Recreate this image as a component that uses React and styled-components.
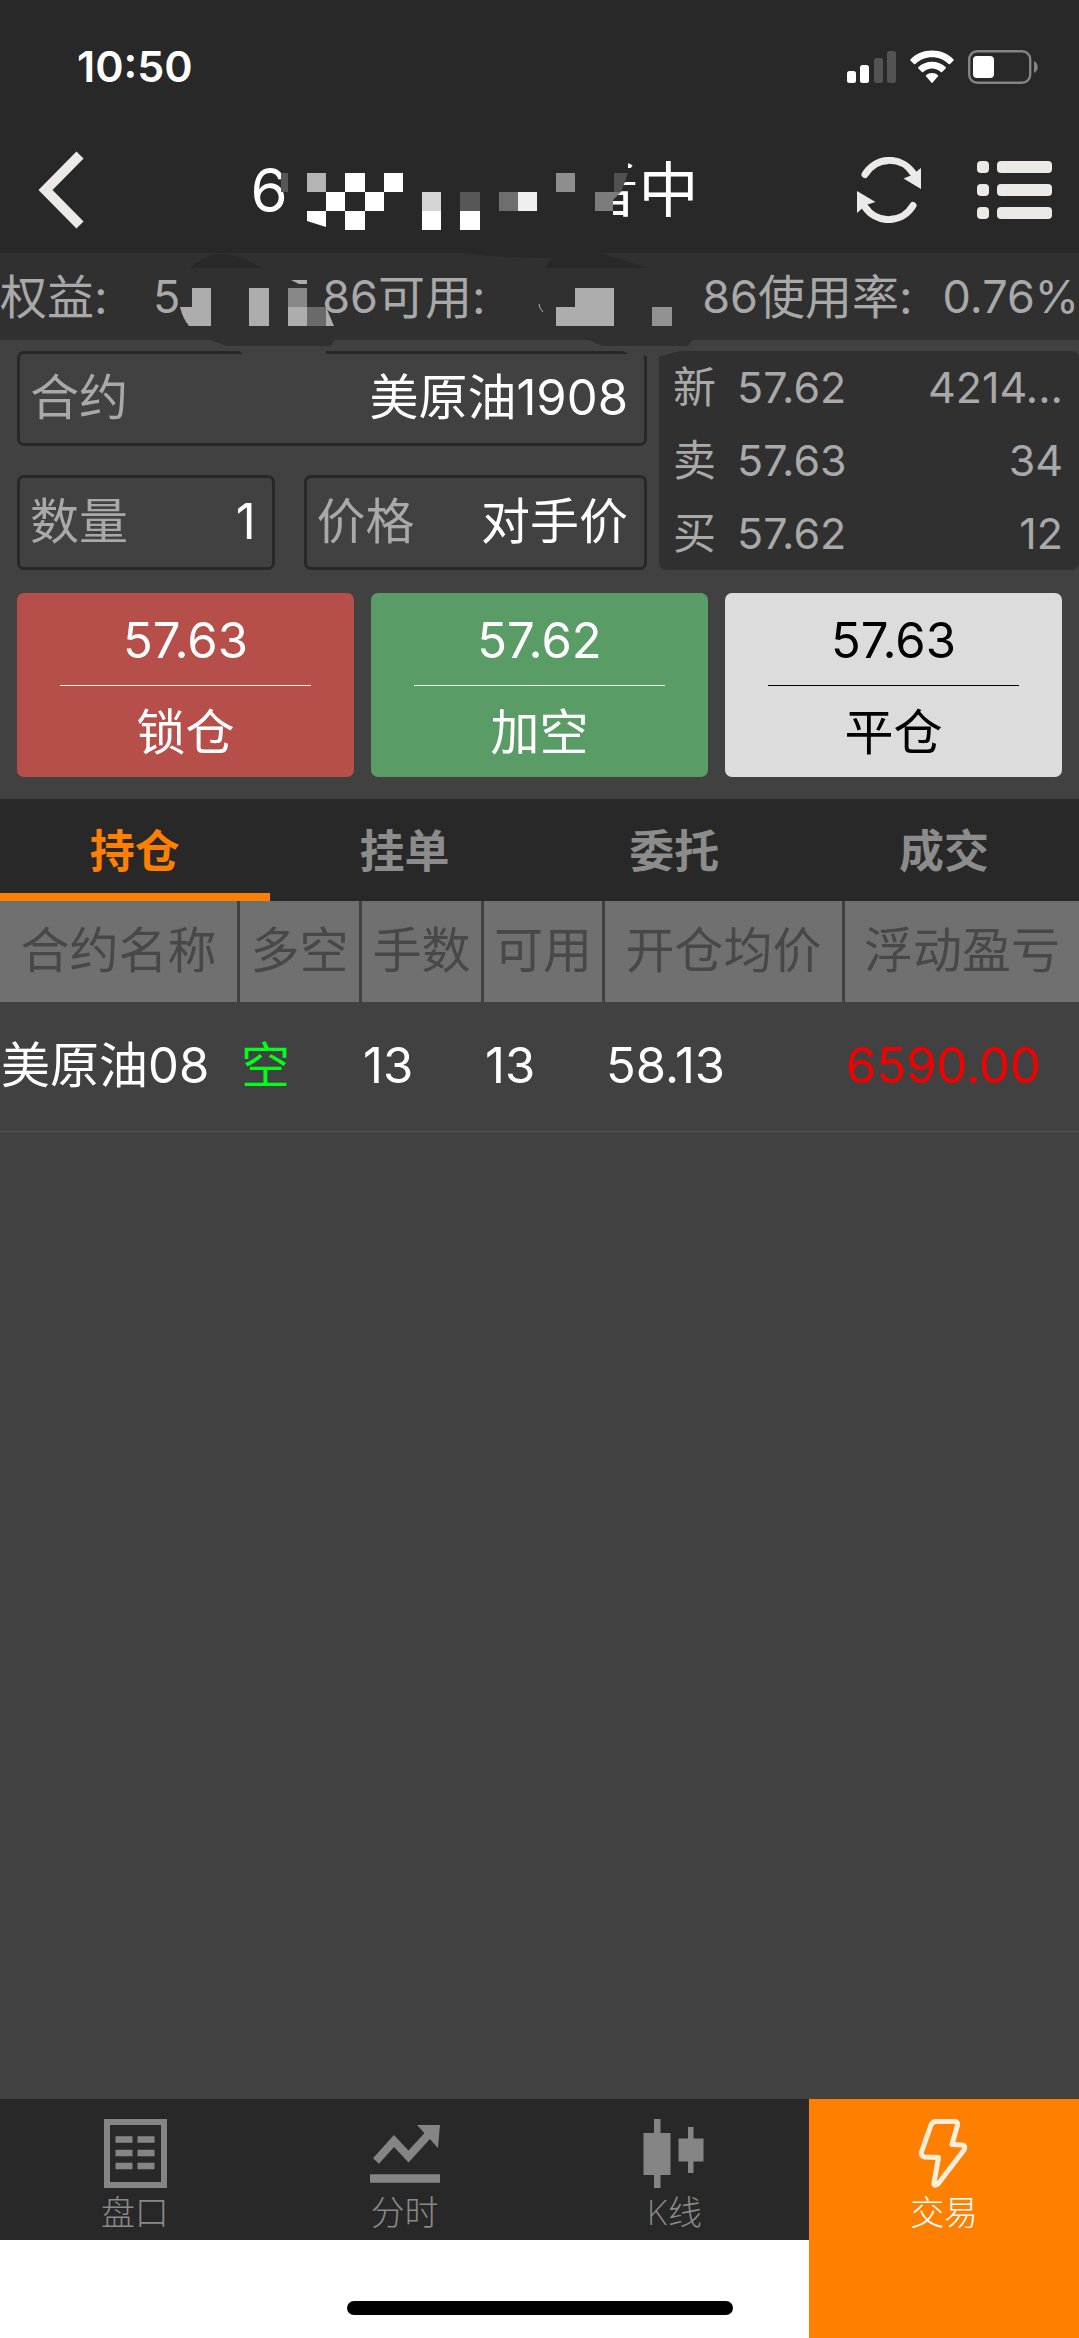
import React, { useState } from 'react';
import styled, { createGlobalStyle } from 'styled-components';

// Color Variables
const mainColor = '#ff8000';
const barColor = '#282828';
const stripColor = '#303030';
const pageColor = '#414141';
const subTextColor = '#a9a9a9';
const iconColor = '#ede9e7';
const tabIconColor = '#858585';

const GlobalStyle = createGlobalStyle`
  * {
    box-sizing: border-box;
  }
  body {
    margin: 0;
    background: ${pageColor};
    font-family: Inter, 'Noto Sans CJK SC', sans-serif;
    font-weight: 400;
    line-height: 1.2;
  }
  button,
  input,
  select {
    font: inherit;
    color: inherit;
    border: none;
    background: none;
    padding: 0;
    margin: 0;
    outline: none;
  }
  button {
    cursor: pointer;
  }
`;

const Page = styled.div`
  position: relative;
  display: flex;
  flex-direction: column;
  min-height: 100vh;
  background: ${pageColor};
  color: white;
`;

const TopBar = styled.header`
  background: ${barColor};
`;

const StatusBar = styled.div`
  display: flex;
  align-items: center;
  justify-content: space-between;
  height: 127px;
  padding: 6px 40px 0 77px;
`;

const Clock = styled.span`
  font-size: 43px;
  font-weight: 600;
`;

const StatusIcons = styled.div`
  display: flex;
  align-items: center;
  gap: 14px;
`;

const NavRow = styled.div`
  display: flex;
  align-items: center;
  justify-content: space-between;
  height: 126px;
  padding: 0 27px 0 38px;
`;

const IconButton = styled.button`
  display: flex;
`;

const NavActions = styled.div`
  display: flex;
  align-items: center;
  gap: 56px;
`;

const Title = styled.h1`
  display: flex;
  justify-content: space-between;
  width: 448px;
  margin: 0;
  font-size: 60px;
  font-weight: 400;
  line-height: 80px;
`;

const Funds = styled.dl`
  display: grid;
  grid-template-columns: 378fr 380fr 321fr;
  height: 87px;
  margin: 0;
  background: ${stripColor};
  color: ${subTextColor};
  line-height: 87px;
`;

const FundItem = styled.div`
  display: flex;
  justify-content: space-between;
  white-space: nowrap;
`;

const FundLabel = styled.dt`
  font-size: 47px;
`;

const FundValue = styled.dd`
  display: flex;
  justify-content: space-between;
  min-width: ${props => (props.$wide ? '225px' : '0')};
  margin: 0;
  font-size: 45px;
`;

const Smudge = styled.svg`
  position: absolute;
  top: 0;
  left: 0;
  pointer-events: none;
`;

const OrderForm = styled.form`
  display: flex;
  flex-direction: column;
  gap: 23px;
  padding: 11px 0 22px 17px;
`;

const OrderTop = styled.div`
  display: grid;
  grid-template-columns: minmax(0, 3fr) minmax(0, 2fr);
  gap: 12px;
`;

const Fields = styled.div`
  display: grid;
  grid-template-columns: minmax(0, 3fr) minmax(0, 4fr);
  gap: 29px;
`;

const Field = styled.label`
  display: flex;
  align-items: center;
  height: 95px;
  padding: 0 16px 0 10px;
  border: 3px solid ${barColor};
  border-radius: 7px;
  font-size: 49px;
  grid-column: ${props => (props.$full ? '1 / -1' : 'auto')};
`;

const FieldName = styled.span`
  flex: none;
  color: ${subTextColor};
`;

const FieldInput = styled.input`
  flex: 1;
  width: 100%;
  min-width: 0;
  text-align: right;
`;

const FieldSelect = styled.select`
  flex: 1;
  min-width: 0;
  appearance: none;
  text-align: right;
  text-align-last: right;
`;

const QuoteBox = styled.dl`
  display: grid;
  grid-template-rows: repeat(3, 1fr);
  margin: 0;
  padding: 0 16px 0 14px;
  border-radius: 7px;
  background: ${stripColor};
  color: ${subTextColor};
  font-size: 43px;
`;

const QuoteRow = styled.div`
  display: grid;
  grid-template-columns: 64px 1fr auto;
  align-items: center;
`;

const QuoteName = styled.dt``;

const QuoteValue = styled.dd`
  margin: 0;
`;

const OrderButtons = styled.div`
  display: grid;
  grid-template-columns: repeat(3, 1fr);
  gap: 17px;
  padding-right: 17px;
`;

const OrderButton = styled.button`
  display: flex;
  flex-direction: column;
  height: 184px;
  padding: 4px 43px 0;
  border-radius: 7px;
  background: ${props => props.$bg};
  color: ${props => props.$color};
  font-size: 49px;
  line-height: 88px;
`;

const OrderPrice = styled.span`
  width: 100%;
  border-bottom: 1px solid;
`;

const OrderName = styled.span`
  width: 100%;
  padding-top: 3px;
`;

const Tabs = styled.nav`
  display: grid;
  grid-template-columns: repeat(4, 1fr);
  background: ${barColor};
`;

const Tab = styled.button`
  height: 102px;
  padding-top: 12px;
  border-bottom: 8px solid
    ${props => (props.$active ? mainColor : 'transparent')};
  color: ${props => (props.$active ? mainColor : '#8c8c8c')};
  font-size: 45px;
  font-weight: 700;
`;

const Content = styled.main`
  flex: 1;
`;

const Table = styled.table`
  width: 100%;
  table-layout: fixed;
  border-collapse: separate;
  border-spacing: 0;
  font-size: 49px;
  white-space: nowrap;
`;

const Th = styled.th`
  width: ${props => props.$width};
  height: 101px;
  padding: 0;
  background: #707070;
  border-right: 3px solid ${pageColor};
  color: #484848;
  font-weight: 400;
  &:last-child {
    border-right: none;
  }
`;

const Td = styled.td`
  height: 130px;
  padding: 0 0 0 1px;
  border-bottom: 1px solid #555555;
  color: ${props => props.$color || 'white'};
`;

const BottomNav = styled.nav`
  position: relative;
  display: grid;
  grid-template-columns: repeat(4, 1fr);
  align-items: start;
  height: 239px;
  background: white;
`;

const BottomItem = styled.button`
  display: flex;
  flex-direction: column;
  align-items: center;
  gap: 2px;
  height: ${props => (props.$active ? '239px' : '141px')};
  padding-top: 20px;
  background: ${props => (props.$active ? mainColor : barColor)};
  color: ${props => (props.$active ? 'white' : '#8a8a8a')};
  font-size: 34px;
  font-weight: 200;
  line-height: 46px;
`;

const HomeIndicator = styled.div`
  position: absolute;
  bottom: 23px;
  left: 50%;
  width: 386px;
  height: 14px;
  border-radius: 7px;
  background: black;
  transform: translateX(-50%);
`;

const SignalIcon = () => (
  <svg width="49" height="32" viewBox="0 0 49 32">
    <rect x="0" y="20" width="9" height="12" rx="2.5" fill="#fff" />
    <rect x="13" y="14" width="9" height="18" rx="2.5" fill="#fff" />
    <rect x="27" y="7" width="9" height="25" rx="2.5" fill="#535353" />
    <rect x="40" y="0" width="9" height="32" rx="2.5" fill="#535353" />
  </svg>
);

const WifiIcon = () => (
  <svg width="44" height="33" viewBox="0 0 44 33" fill="#fff">
    <path d="M22 0.5C13.5 0.5 6 3.8 0.6 9.2c-.5.5-.5 1 0 1.5L4 14c.5.4 1 .4 1.400 0C9.700 9.700 15.500 7.200 22 7.200S34.300 9.700 38.600 14c.4.4.9.4 1.400 0l3.400-3.300c.5-.5.5-1 0-1.500C38 3.800 30.500.5 22 .5z" />
    <path d="M22 11.800c-5.300 0-10 2-13.600 5.300-.5.5-.5 1 0 1.500l3.500 3.400c.4.4.9.4 1.400 0 2.300-2.100 5.300-3.400 8.700-3.400s6.400 1.300 8.700 3.400c.5.4 1 .4 1.400 0l3.500-3.400c.5-.5.5-1 0-1.500C32 13.800 27.300 11.800 22 11.800z" />
    <path d="M22 23c-2.300 0-4.300.8-5.800 2.100-.5.5-.5 1 0 1.500l5.100 6c.4.500 1 .5 1.400 0l5.100-6c.5-.5.5-1 0-1.500C26.300 23.800 24.300 23 22 23z" />
  </svg>
);

const BatteryIcon = () => (
  <svg width="71" height="34" viewBox="0 0 71 34">
    <rect
      x="1.2"
      y="1.2"
      width="61"
      height="31.6"
      rx="8"
      fill="none"
      stroke="#848484"
      strokeWidth="2.4"
    />
    <rect x="5" y="6" width="21" height="22" rx="4" fill="#fff" />
    <path d="M66 11c5 2.500 5 9.500 0 12z" fill="#848484" />
  </svg>
);

const BackIcon = () => (
  <svg width="54" height="78" viewBox="0 0 54 78">
    <path
      d="M42 4L7.500 39L42 74"
      fill="none"
      stroke={iconColor}
      strokeWidth="10"
    />
  </svg>
);

const RefreshIcon = () => (
  <svg width="64" height="66" viewBox="0 0 64 66">
    <g fill="none" stroke={iconColor} strokeWidth="7" strokeLinecap="round">
      <path d="M8 17.500A28.500 29 0 0 1 56 16" />
      <path d="M56 48.500A28.500 29 0 0 1 8 50" />
    </g>
    <path d="M64 11V32L46.500 21.500L55 18z" fill={iconColor} />
    <path d="M0 34L18.500 45L9 48L0 56z" fill={iconColor} />
  </svg>
);

const ListIcon = () => (
  <svg width="75" height="58" viewBox="0 0 75 58" fill={iconColor}>
    {[0, 23, 46].map(y => (
      <g key={y}>
        <rect x="0" y={y} width="12" height="12" rx="4" />
        <rect x="20" y={y} width="55" height="12" rx="4" />
      </g>
    ))}
  </svg>
);

const BookIcon = () => (
  <svg width="70" height="69" viewBox="0 0 70 69">
    <rect
      x="7"
      y="3"
      width="57"
      height="63"
      fill="none"
      stroke={tabIconColor}
      strokeWidth="6"
    />
    <path
      d="M15.500 20.500h17M37.500 20.500h17M15.500 34h17M37.500 34h17M15.500 47h17M37.500 47h17"
      stroke={tabIconColor}
      strokeWidth="6.5"
    />
  </svg>
);

const TrendIcon = () => (
  <svg width="70" height="69" viewBox="0 0 70 69" fill="none">
    <path
      d="M6 42L24 22L38.500 37.500L60 14"
      stroke={tabIconColor}
      strokeWidth="8"
    />
    <path d="M47 6H70L68 29z" fill={tabIconColor} />
    <path d="M0 59.500h70" stroke={tabIconColor} strokeWidth="8.5" />
  </svg>
);

const CandleIcon = () => (
  <svg width="70" height="69" viewBox="0 0 70 69" fill={tabIconColor}>
    <rect x="15" y="0" width="6.500" height="69" />
    <rect x="4.500" y="14" width="27" height="42" />
    <rect x="49" y="8" width="5.500" height="46" />
    <rect x="39.500" y="19.500" width="25" height="23" />
  </svg>
);

const BoltIcon = () => (
  <svg width="70" height="69" viewBox="0 0 70 69">
    <path
      d="M27 2.500H46Q49 2.500 48.500 6L43 25.500L53.500 26Q57 27 55 31L29 65Q25 68 25 64L29.500 38.500L15.500 38Q11.500 37 12.500 33L22 6Q23.500 2.500 27 2.500z"
      fill="none"
      stroke="#ffeeda"
      strokeWidth="5"
      strokeLinejoin="round"
    />
  </svg>
);

// mosaic blocks: x, y, width, height, color
const mosaic = [
  [281, 173, 7, 19, '#575757'],
  [307, 173, 19, 19, '#b4b4b4'],
  [345, 173, 20, 19, '#fff'],
  [384, 173, 19, 19, '#fff'],
  [556, 173, 19, 19, '#8e8e8e'],
  [326, 192, 19, 19, '#fff'],
  [365, 192, 19, 19, '#fff'],
  [422, 192, 19, 19, '#d5d5d5'],
  [460, 192, 20, 19, '#575757'],
  [499, 192, 19, 19, '#6e6e6e'],
  [518, 192, 19, 19, '#efefef'],
  [345, 211, 20, 19, '#fff'],
  [422, 211, 19, 19, '#fff'],
  [460, 211, 20, 19, '#fff'],
  [192, 288, 19, 38, '#adadad'],
  [249, 288, 20, 38, '#adadad'],
  [288, 288, 19, 19, '#888'],
  [288, 307, 19, 19, '#adadad'],
  [307, 307, 19, 19, '#6a6a6a'],
  [575, 288, 39, 38, '#adadad'],
  [556, 307, 19, 19, '#adadad'],
  [652, 307, 20, 19, '#929292'],
];

const PrivacySmudge = () => (
  <Smudge width="1079" height="380" viewBox="0 0 1079 380" aria-hidden="true">
    <path
      d="M570 155H628V168H642V182H625L613 200V225H570z"
      fill={barColor}
    />
    <path d="M190 268C202 258 213 254 223 254Q238 254 262 268z" fill={barColor} />
    <path d="M464 253H600L648 268H545L552 258Q500 258 464 253z" fill={barColor} />
    <path d="M238 350L245 356H326V350z" fill={pageColor} />
    <path d="M621 350L631 355H644V356H662L683 350z" fill={pageColor} />
    <path d="M211 340L226 346H331L334 340z" fill={stripColor} />
    <path d="M588 340L603 346H688L693 340z" fill={stripColor} />
    {mosaic.map(([x, y, w, h, color]) => (
      <rect key={`${x}-${y}`} x={x} y={y} width={w} height={h} fill={color} />
    ))}
    <path d="M307 211H326V227L307 221z" fill="#fff" />
    <path d="M614 173H628L621 192H614z" fill="#505050" />
    <path d="M595 192H621L613 200V211H595z" fill="#7c7c7c" />
    <path d="M180 307H192V326H189Q183 319 180 307z" fill="#adadad" />
    <path d="M326 307L334 326H326z" fill="#adadad" />
    <path d="M291 280H307V284H299z" fill="#adadad" />
    <path d="M539 304Q539 308 543 312" stroke="#adadad" fill="none" />
  </Smudge>
);

const quotes = [
  { name: '新', price: '57.62', volume: '4214...' },
  { name: '卖', price: '57.63', volume: '34' },
  { name: '买', price: '57.62', volume: '12' },
];

const orders = [
  { name: '锁仓', price: '57.63', bg: '#b64e4a', color: 'white' },
  { name: '加空', price: '57.62', bg: '#5a9c65', color: 'white' },
  { name: '平仓', price: '57.63', bg: '#dcdcdc', color: 'black' },
];

const tabs = ['持仓', '挂单', '委托', '成交'];

const columns = [
  { name: '合约名称', width: '240px' },
  { name: '多空', width: '122px' },
  { name: '手数', width: '122px' },
  { name: '可用', width: '121px' },
  { name: '开仓均价', width: '240px' },
  { name: '浮动盈亏', width: 'auto' },
];

const bottomItems = [
  { name: '盘口', Icon: BookIcon },
  { name: '分时', Icon: TrendIcon },
  { name: 'K线', Icon: CandleIcon },
  { name: '交易', Icon: BoltIcon },
];

export default function App() {
  const [tab, setTab] = useState('持仓');
  const [inputs, setInputs] = useState({
    contract: '美原油1908',
    amount: '1',
    price: '对手价',
  });

  const handleChange = e => {
    setInputs({
      ...inputs,
      [e.target.name]: e.target.value,
    });
  };

  return (
    <Page>
      <GlobalStyle />
      <TopBar>
        <StatusBar>
          <Clock>10:50</Clock>
          <StatusIcons>
            <SignalIcon />
            <WifiIcon />
            <BatteryIcon />
          </StatusIcons>
        </StatusBar>
        <NavRow>
          <IconButton type="button" aria-label="返回">
            <BackIcon />
          </IconButton>
          <Title>
            <span>6</span>
            <span>者中</span>
          </Title>
          <NavActions>
            <IconButton type="button" aria-label="刷新">
              <RefreshIcon />
            </IconButton>
            <IconButton type="button" aria-label="菜单">
              <ListIcon />
            </IconButton>
          </NavActions>
        </NavRow>
      </TopBar>

      <Funds>
        <FundItem>
          <FundLabel>权益:</FundLabel>
          <FundValue $wide>
            <span>5</span>
            <span>86</span>
          </FundValue>
        </FundItem>
        <FundItem>
          <FundLabel>可用:</FundLabel>
          <FundValue>86</FundValue>
        </FundItem>
        <FundItem>
          <FundLabel>使用率:</FundLabel>
          <FundValue>0.76%</FundValue>
        </FundItem>
      </Funds>

      <OrderForm>
        <OrderTop>
          <Fields>
            <Field $full>
              <FieldName>合约</FieldName>
              <FieldInput
                type="text"
                name="contract"
                value={inputs.contract}
                onChange={handleChange}
              />
            </Field>
            <Field>
              <FieldName>数量</FieldName>
              <FieldInput
                type="text"
                name="amount"
                value={inputs.amount}
                onChange={handleChange}
              />
            </Field>
            <Field>
              <FieldName>价格</FieldName>
              <FieldSelect
                name="price"
                value={inputs.price}
                onChange={handleChange}
              >
                <option>对手价</option>
              </FieldSelect>
            </Field>
          </Fields>
          <QuoteBox>
            {quotes.map(quote => (
              <QuoteRow key={quote.name}>
                <QuoteName>{quote.name}</QuoteName>
                <QuoteValue>{quote.price}</QuoteValue>
                <QuoteValue>{quote.volume}</QuoteValue>
              </QuoteRow>
            ))}
          </QuoteBox>
        </OrderTop>
        <OrderButtons>
          {orders.map(order => (
            <OrderButton
              key={order.name}
              type="button"
              $bg={order.bg}
              $color={order.color}
            >
              <OrderPrice>{order.price}</OrderPrice>
              <OrderName>{order.name}</OrderName>
            </OrderButton>
          ))}
        </OrderButtons>
      </OrderForm>

      <Tabs>
        {tabs.map(name => (
          <Tab
            key={name}
            type="button"
            $active={name === tab}
            onClick={() => setTab(name)}
          >
            {name}
          </Tab>
        ))}
      </Tabs>

      <Content>
        <Table>
          <thead>
            <tr>
              {columns.map(column => (
                <Th key={column.name} $width={column.width}>
                  {column.name}
                </Th>
              ))}
            </tr>
          </thead>
          <tbody>
            <tr>
              <Td>美原油08</Td>
              <Td $color="#00ff1a">空</Td>
              <Td>13</Td>
              <Td>13</Td>
              <Td>58.13</Td>
              <Td $color="#f40000">6590.00</Td>
            </tr>
          </tbody>
        </Table>
      </Content>

      <BottomNav>
        {bottomItems.map(({ name, Icon }) => (
          <BottomItem key={name} type="button" $active={name === '交易'}>
            <Icon />
            {name}
          </BottomItem>
        ))}
        <HomeIndicator />
      </BottomNav>

      <PrivacySmudge />
    </Page>
  );
}
